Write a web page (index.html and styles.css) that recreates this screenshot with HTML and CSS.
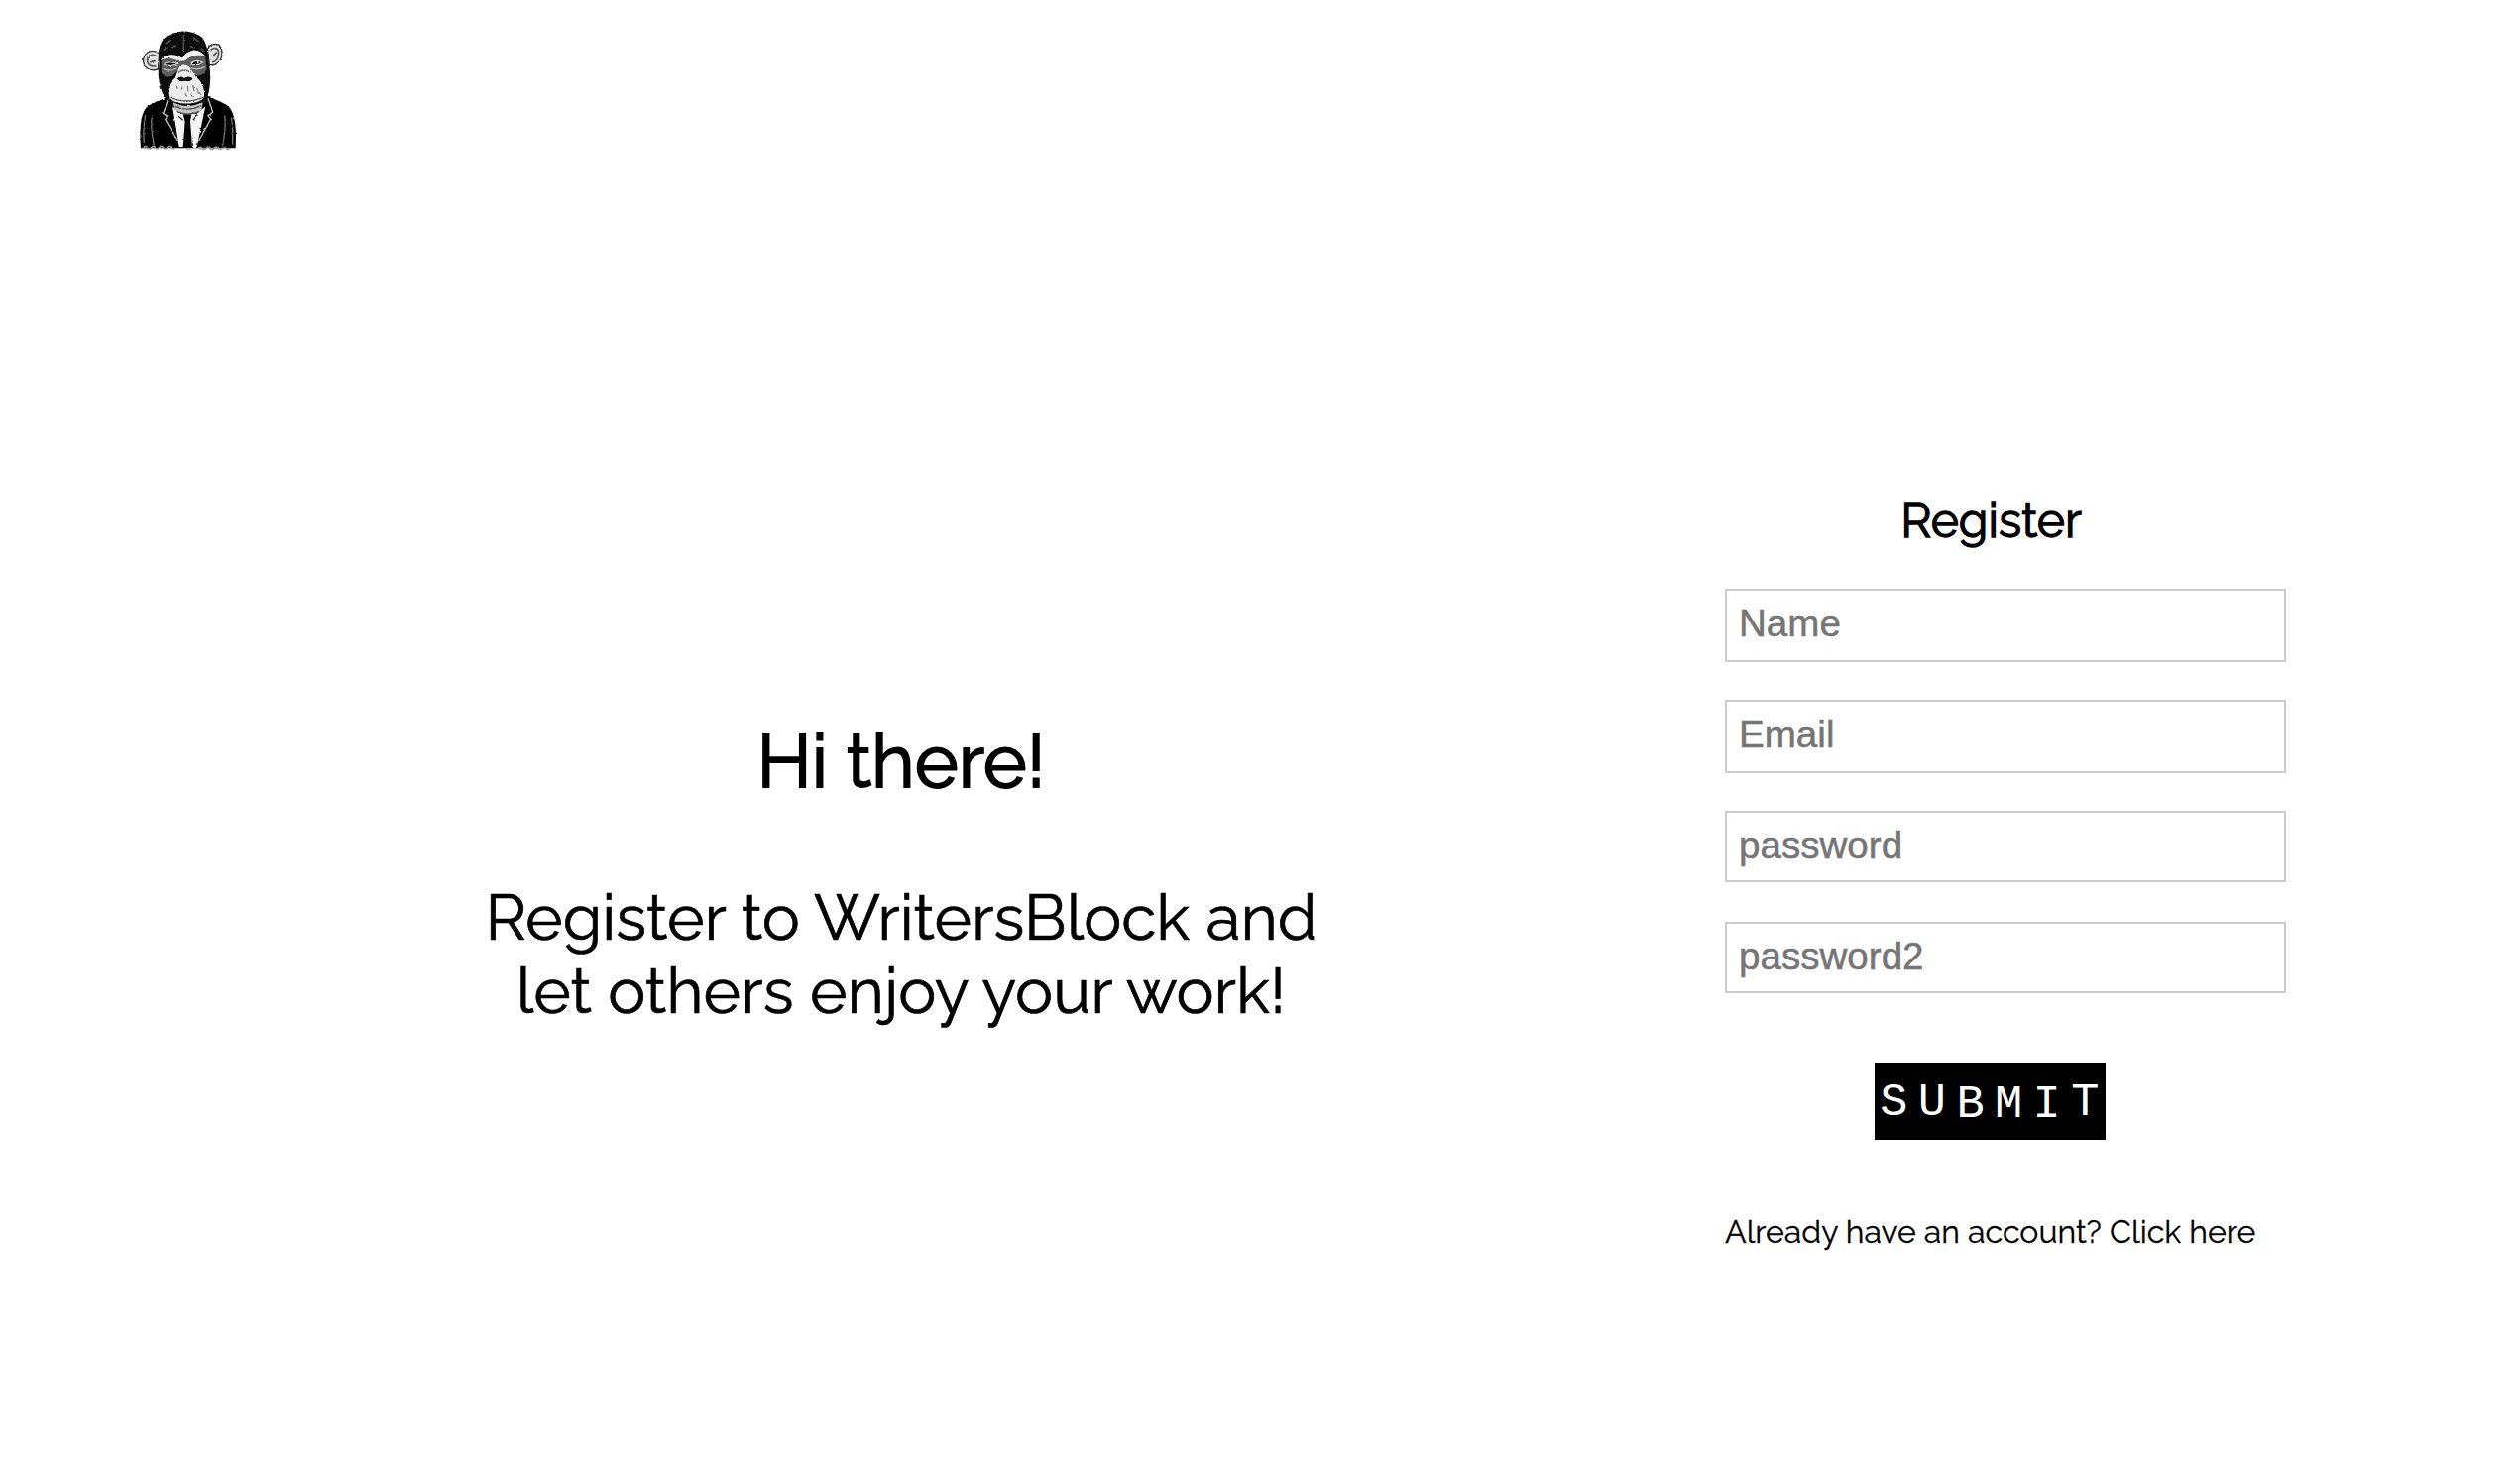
FILE: index.html
```html
<!DOCTYPE html>
<html lang="en">
<head>
<meta charset="utf-8">
<title>WritersBlock - Register</title>
<link rel="stylesheet" href="styles.css">
</head>
<body>
<header class="header">
  <svg class="logo" viewBox="0 0 360 420" role="img" aria-label="WritersBlock">
    <defs>
      <filter id="fur" x="-5%" y="-5%" width="110%" height="110%">
        <feTurbulence type="fractalNoise" baseFrequency="0.09" numOctaves="2" seed="4" result="n"/>
        <feDisplacementMap in="SourceGraphic" in2="n" scale="7" xChannelSelector="R" yChannelSelector="G"/>
        <feGaussianBlur stdDeviation="1.6"/>
      </filter>
    </defs>
    <g filter="url(#fur)">
      <!-- jacket -->
      <path d="M36 388C32 340 34 288 52 266C70 250 96 246 114 234L246 232C264 248 296 250 308 270C324 296 326 344 323 388Z" fill="#050505"/>
      <path d="M44 386q6-8 12 0t12 0t12 0t12 0t12 0t12 0t12 0t12 0M210 388q6-8 12 0t12 0t12 0t12 0t12 0t12 0t12 0t12 0" fill="none" stroke="#999" stroke-width="5"/>
      <path d="M70 290C64 320 70 350 76 380M290 290C296 320 288 350 284 380M50 290C44 320 44 350 46 372M310 296C316 320 314 350 314 376" fill="none" stroke="#777" stroke-width="4"/>
      <!-- shirt and tie -->
      <path d="M132 262L152 384H206L232 262L206 284H154Z" fill="#f4f4f4"/>
      <path d="M164 286H190L186 306L192 386H164L170 306Z" fill="#050505"/>
      <path d="M150 292L164 304M208 288L194 304" stroke="#333" stroke-width="4"/>
      <path d="M118 242L104 284L118 292L110 302L148 366M240 238L254 280L240 290L248 300L212 366" fill="none" stroke="#c0c0c0" stroke-width="4"/>
      <!-- ears -->
      <path d="M92 102C72 86 48 96 44 120C42 142 60 158 88 150Z" fill="#e2e2e2" stroke="#333" stroke-width="4"/>
      <path d="M84 110C68 100 54 110 56 126C60 142 72 142 82 140M80 124L66 128" fill="none" stroke="#555" stroke-width="5"/>
      <path d="M238 88C248 68 276 68 281 92C286 122 266 142 244 136Z" fill="#e2e2e2" stroke="#333" stroke-width="4"/>
      <path d="M246 94C256 80 272 84 272 102C270 120 262 128 252 128M266 98L254 110" fill="none" stroke="#555" stroke-width="5"/>
      <!-- head -->
      <path d="M90 106C90 64 112 42 146 38C168 30 202 38 220 52C238 72 240 100 242 130C250 166 248 212 234 246L204 264H140L112 240C94 216 84 168 92 136Z" fill="#080808"/>
      <path d="M166 44V96M110 72L126 60M194 52L212 66M104 92L116 82M218 86L228 96M130 84l14-6M186 80l14 4" stroke="#4d4d4d" stroke-width="5"/>
      <!-- brow and eyes -->
      <path d="M98 118C112 100 144 106 164 116C184 92 214 90 232 112L236 150C222 174 198 176 180 156H146C130 176 108 180 98 158Z" fill="#5c5c5c"/>
      <path d="M96 122C112 98 146 104 162 116C178 88 212 84 232 110C214 104 188 106 170 124L154 126C132 116 114 114 96 122Z" fill="#f4f4f4"/>
      <path d="M108 132Q126 124 148 134Q128 142 108 137ZM190 129Q206 119 224 129Q210 140 190 136Z" fill="#0a0a0a" stroke="#ccc" stroke-width="4"/>
      <path d="M104 149Q124 158 146 147M188 146Q210 154 230 142" fill="none" stroke="#bbb" stroke-width="4"/>
      <circle cx="209" cy="129" r="3" fill="#fff"/>
      <!-- muzzle -->
      <path d="M152 144C160 134 176 134 186 146L204 174C222 186 234 218 226 238C206 260 142 258 122 238C114 214 122 188 140 176Z" fill="#ececec"/>
      <path d="M150 160Q168 146 188 160" fill="none" stroke="#777" stroke-width="4"/>
      <path d="M146 178Q158 168 168 177Q182 168 194 178Q188 190 170 185Q154 190 146 178Z" fill="#111"/>
      <path d="M124 234Q172 258 228 234" fill="none" stroke="#444" stroke-width="4"/>
      <path d="M144 200l4 10M162 202l-2 10M178 202l2 16M194 198l4 18M170 222l6 10M206 208l6 16M188 224l5 10M214 220l5 8" stroke="#8a8a8a" stroke-width="4"/>
      <!-- chin -->
      <path d="M134 250Q174 272 224 250L220 274Q178 296 140 274Z" fill="#c4c4c4"/>
      <path d="M140 262Q178 280 220 260M146 278Q178 292 212 278" fill="none" stroke="#555" stroke-width="4"/>
    </g>
  </svg>
</header>
<main class="main">
  <section class="intro">
    <h1 class="intro-title">Hi there!</h1>
    <p class="intro-text">Register to WritersBlock and<br>let others enjoy your work!</p>
  </section>
  <form class="form">
    <h2 class="form-title">Register</h2>
    <input class="field" type="text" placeholder="Name">
    <input class="field" type="text" placeholder="Email">
    <input class="field field-short" type="password" placeholder="password">
    <input class="field field-short" type="password" placeholder="password2">
    <button class="submit" type="button"><span class="key">S</span><span class="key">U</span><span class="key key-low">B</span><span class="key key-low">M</span><span class="key key-low">I</span><span class="key">T</span></button>
    <p class="login">Already have an account? Click here</p>
  </form>
</main>
</body>
</html>
```
FILE: styles.css
```css
* { box-sizing: border-box; }
body {
  margin: 0;
  background: #fff;
  color: #000;
  font-family: Raleway, Lato, sans-serif;
}
.header { height: 200px; padding: 20px 130px; }
.logo { display: block; width: 120px; height: 140px; }
.main { display: flex; align-items: flex-start; }
.intro { width: 1740px; padding: 524px 0 0 78px; text-align: center; }
.intro-title {
  margin: 0 0 77px;
  font-size: 74.88px;
  line-height: 88px;
  font-weight: 400;
  -webkit-text-stroke: 2px #000;
}
.intro-text {
  margin: 0;
  font-size: 64px;
  line-height: 74px;
  -webkit-text-stroke: 0.7px #000;
}
.form {
  display: flex;
  flex-direction: column;
  width: 566px;
  padding-top: 297px;
}
.form-title {
  width: 537px;
  margin: 0 0 41px;
  text-align: center;
  font-size: 48px;
  line-height: 56px;
  font-weight: 400;
  -webkit-text-stroke: 1.3px #000;
}
.field {
  width: 566px;
  height: 74px;
  margin: 0 0 38px;
  padding: 0 12px 5px;
  border: 2px solid #ccc;
  border-radius: 0;
  background: #fff;
  font: 38.6px "Liberation Sans", Arial, sans-serif;
  outline: none;
}
.field::placeholder {
  color: #757575;
  opacity: 1;
  -webkit-text-stroke: 0.5px #757575;
}
.field-short { height: 72px; margin-bottom: 40px; padding-bottom: 3px; }
.submit {
  display: grid;
  grid-template-columns: repeat(6, 38.6px);
  justify-items: center;
  align-items: start;
  width: 233px;
  height: 78px;
  margin: 30px 0 74px 151px;
  padding: 0;
  border: 0;
  background: #000;
  color: #fff;
  font: 47px/82px "Liberation Mono", monospace;
}
.key-low { padding-top: 2px; }
.login {
  margin: 0;
  font-size: 32px;
  line-height: 38px;
  white-space: nowrap;
  -webkit-text-stroke: 0.3px #000;
}
```
